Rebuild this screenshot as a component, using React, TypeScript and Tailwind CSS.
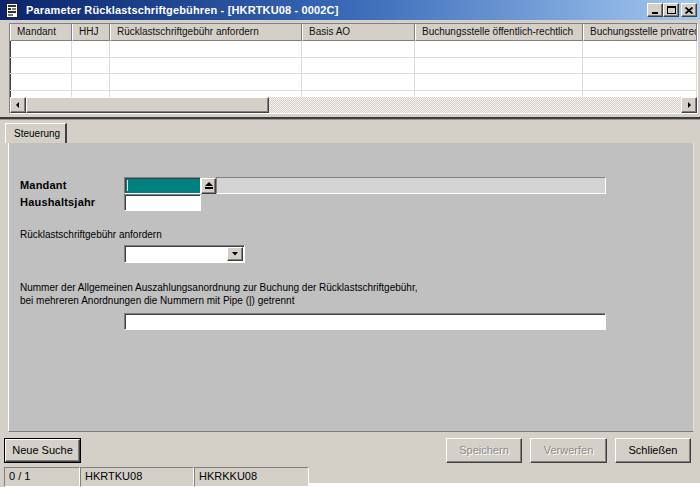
import React from 'react';

const raised =
  'border border-t-white border-l-white border-r-[#404040] border-b-[#404040] shadow-[inset_-1px_-1px_0_#808080] bg-[#d4d0c8]';
const sunken =
  'border border-t-[#808080] border-l-[#808080] border-r-white border-b-white shadow-[inset_1px_1px_0_#404040]';

const columns = [
  { label: 'Mandant', w: 'w-[62px]' },
  { label: 'HHJ', w: 'w-[38px]' },
  { label: 'Rücklastschriftgebühr anfordern', w: 'w-[192px]' },
  { label: 'Basis AO', w: 'w-[113px]' },
  { label: 'Buchungsstelle öffentlich-rechtlich', w: 'w-[168px]' },
  { label: 'Buchungsstelle privatrechtlich', w: 'w-[114px]' },
];

function TitleBar() {
  return (
    <div className="h-[20px] flex items-center bg-linear-to-r from-[#0a246a] via-[#3a6ab8] to-[#a6caf0] pl-[5px] pr-[3px]">
      <svg width="14" height="15" viewBox="0 0 14 15" className="mr-[7px]">
        <rect x="1.5" y="0.5" width="11" height="14" fill="#fff" stroke="#222" />
        <rect x="3" y="2" width="8" height="2" fill="#333" />
        <rect x="3" y="5" width="3" height="2" fill="#333" />
        <rect x="7" y="5" width="4" height="2" fill="#777" />
        <rect x="3" y="8" width="8" height="2" fill="#333" />
        <rect x="3" y="11" width="5" height="2" fill="#777" />
      </svg>
      <span className="text-white font-bold text-[11px] tracking-[0.15px] leading-none">
        Parameter Rücklastschriftgebühren - [HKRTKU08 - 0002C]
      </span>
      <div className="ml-auto flex items-center">
        <div className={`${raised} w-[16px] h-[14px] flex items-end justify-center pb-[2px]`}>
          <div className="w-[6px] h-[2px] bg-black" />
        </div>
        <div className={`${raised} w-[16px] h-[14px] flex items-center justify-center`}>
          <div className="w-[9px] h-[8px] border border-black border-t-2" />
        </div>
        <div className={`${raised} w-[16px] h-[14px] ml-[2px] flex items-center justify-center`}>
          <svg width="8" height="7" viewBox="0 0 8 7">
            <path d="M0.5 0.5 L7.5 6.5 M7.5 0.5 L0.5 6.5" stroke="#000" strokeWidth="1.8" />
          </svg>
        </div>
      </div>
    </div>
  );
}

function Arrow({ dir }: { dir: 'left' | 'right' }) {
  const paths = {
    left: 'M5 1 L2 4 L5 7 Z',
    right: 'M3 1 L6 4 L3 7 Z',
  };
  return (
    <svg width="8" height="8" viewBox="0 0 8 8">
      <path d={paths[dir]} fill="#000" />
    </svg>
  );
}

function Grid() {
  return (
    <div className={`ml-[9px] mr-[2px] mt-[3px] h-[91px] flex flex-col bg-white ${sunken}`}>
      <div className="flex h-[17px] shrink-0">
        {columns.map((c) => (
          <div
            key={c.label}
            className={`${c.w} shrink-0 bg-[#d4d0c8] border-l border-l-white border-r border-r-[#808080] border-b border-b-[#808080] pl-[6px] text-[10px] leading-[16px] whitespace-nowrap overflow-hidden text-[#111]`}
          >
            {c.label}
          </div>
        ))}
      </div>
      <div className="flex-1 overflow-hidden">
        {[0, 1, 2, 3].map((r) => (
          <div key={r} className="flex h-[16.5px] border-b border-b-[#dcdcdc]">
            {columns.map((c) => (
              <div key={c.label} className={`${c.w} shrink-0 border-r border-r-[#dcdcdc]`} />
            ))}
          </div>
        ))}
      </div>
      <div className="flex h-[16px] shrink-0">
        <div className={`${raised} w-[16px] flex items-center justify-center`}>
          <Arrow dir="left" />
        </div>
        <div className={`${raised} w-[243px]`} />
        <div className="flex-1 bg-[repeating-conic-gradient(#d4d0c8_0_25%,#f4f3f0_0_50%)] bg-size-[2px_2px]" />
        <div className={`${raised} w-[16px] flex items-center justify-center`}>
          <Arrow dir="right" />
        </div>
      </div>
    </div>
  );
}

function Button({ label, disabled, isDefault }: { label: string; disabled?: boolean; isDefault?: boolean }) {
  return (
    <div className={`h-[25px] ${isDefault ? 'border border-black' : ''} flex`}>
      <div
        className={`${raised} flex-1 flex items-center justify-center text-[11px] ${
          disabled ? 'text-[#8c8a86] [text-shadow:1px_1px_0_#fff]' : 'text-black'
        }`}
      >
        {label}
      </div>
    </div>
  );
}

export default function App() {
  return (
    <div className="w-[700px] h-[487px] overflow-hidden bg-[#d4d0c8] flex flex-col font-['Liberation_Sans',Arial,sans-serif] text-black">
      <TitleBar />
      <Grid />

      {/* splitter */}
      <div className="mt-[3px] h-[2px] bg-[#3c3c3c]" />
      <div className="h-[1px] bg-[#9a9894]" />

      {/* tabs */}
      <div className="pl-[5px] pt-[3px] flex">
        <div className="h-[20px] w-[62px] border-t border-l border-t-white border-l-white border-r-2 border-r-[#404040] flex items-center pl-[8px] text-[10px]">
          Steuerung
        </div>
      </div>

      {/* tab page */}
      <div className="ml-[8px] mr-[6px] h-[289px] bg-[#c0c0c0] border-l border-l-white border-r border-r-[#e4e4e4] border-b border-b-[#7c7c7c] pl-[11px] pt-[34px]">
        <div className="flex items-center h-[17px]">
          <div className="w-[104px] font-bold text-[11px] tracking-[0.2px]">Mandant</div>
          <div className={`w-[77px] h-[17px] bg-[#008080] ${sunken} pl-[2px] flex items-center`}>
            <div className="w-[1px] h-[11px] bg-[#cfe9e9]" />
          </div>
          <div className={`${raised} w-[15px] h-[16px] flex flex-col items-center justify-center gap-[1px]`}>
            <svg width="8" height="4" viewBox="0 0 8 4">
              <path d="M0 4 L4 0 L8 4 Z" fill="#000" />
            </svg>
            <div className="w-[8px] h-[1.5px] bg-black" />
          </div>
          <div className={`w-[390px] h-[17px] bg-[#d4d4d4] ${sunken} shadow-none`} />
        </div>
        <div className="flex items-center h-[17px]">
          <div className="w-[104px] font-bold text-[11px] tracking-[0.2px]">Haushaltsjahr</div>
          <div className={`w-[77px] h-[17px] bg-white ${sunken}`} />
        </div>

        <div className="mt-[18px] text-[10px] leading-[12px]">Rücklastschriftgebühr anfordern</div>
        <div className={`mt-[4px] ml-[104px] w-[121px] h-[18px] bg-white ${sunken} flex justify-end items-center pr-[1px]`}>
          <div className={`${raised} w-[16px] h-[14px] flex items-center justify-center`}>
            <svg width="6" height="4" viewBox="0 0 6 4">
              <path d="M0 0 L6 0 L3 3.5 Z" fill="#000" />
            </svg>
          </div>
        </div>

        <div className="mt-[18px] text-[10px] leading-[13px]">
          <div>Nummer der Allgemeinen Auszahlungsanordnung zur Buchung der Rücklastschriftgebühr,</div>
          <div>bei mehreren Anordnungen die Nummern mit Pipe (|) getrennt</div>
        </div>
        <div className={`mt-[6px] ml-[104px] w-[482px] h-[17px] bg-white ${sunken}`} />
      </div>

      {/* buttons */}
      <div className="mt-[6px] flex items-center pl-[4px] pr-[9px]">
        <div className="w-[77px]">
          <Button label="Neue Suche" isDefault />
        </div>
        <div className="ml-auto flex gap-[8px]">
          <div className="w-[76px]">
            <Button label="Speichern" disabled />
          </div>
          <div className="w-[77px]">
            <Button label="Verwerfen" disabled />
          </div>
          <div className="w-[76px]">
            <Button label="Schließen" />
          </div>
        </div>
      </div>

      {/* status bar */}
      <div className="mt-[4px] flex flex-1 pl-[4px]">
        <div className={`w-[76px] ${sunken} shadow-none pl-[4px] text-[11px] leading-[16px] bg-[#d4d0c8]`}>0 / 1</div>
        <div className={`w-[114px] ${sunken} shadow-none pl-[4px] text-[11px] leading-[16px] bg-[#d4d0c8]`}>HKRTKU08</div>
        <div className={`w-[115px] ${sunken} shadow-none pl-[4px] text-[11px] leading-[16px] bg-[#d4d0c8]`}>HKRKKU08</div>
        <div className="flex-1 flex flex-col">
          <div className="flex-1" />
          <div className="h-[4px] bg-white" />
        </div>
      </div>
    </div>
  );
}
